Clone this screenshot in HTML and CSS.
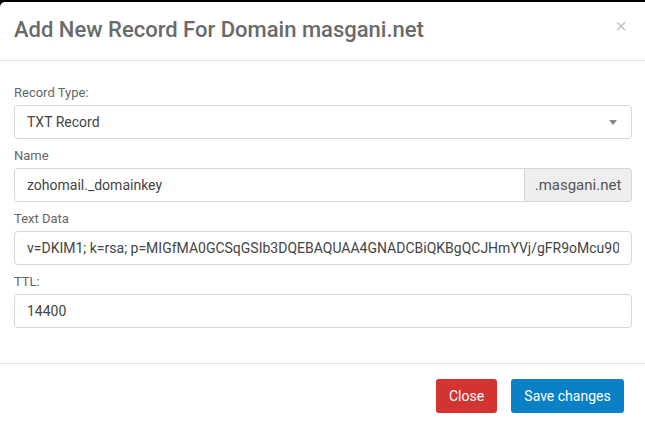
FILE: index.html
```html
<!DOCTYPE html>
<html lang="en">
<head>
<meta charset="utf-8">
<title>Add New Record</title>
<link rel="stylesheet" href="styles.css">
</head>
<body>
<div class="modal">
  <div class="modal-header">
    <h4 class="modal-title">Add New Record For Domain masgani.net</h4>
    <button class="close" type="button" aria-label="Close">&times;</button>
  </div>
  <div class="modal-body">
    <div class="form-group">
      <div class="label">Record Type:</div>
      <div class="field select">
        <span class="value">TXT Record</span>
        <span class="caret"></span>
      </div>
    </div>
    <div class="form-group">
      <div class="label">Name</div>
      <div class="input-group">
        <div class="field grow"><span class="value">zohomail._domainkey</span></div>
        <span class="addon">.masgani.net</span>
      </div>
    </div>
    <div class="form-group">
      <div class="label">Text Data</div>
      <div class="field"><span class="value">v=DKIM1; k=rsa; p=MIGfMA0GCSqGSIb3DQEBAQUAA4GNADCBiQKBgQCJHmYVj/gFR9oMcu90</span></div>
    </div>
    <div class="form-group">
      <div class="label">TTL:</div>
      <div class="field"><span class="value">14400</span></div>
    </div>
  </div>
  <div class="modal-footer">
    <button class="btn btn-danger" type="button">Close</button>
    <button class="btn btn-primary" type="button">Save changes</button>
  </div>
</div>
</body>
</html>
```
FILE: styles.css
```css
* {
  box-sizing: border-box;
}

html, body {
  margin: 0;
  height: 100%;
}

body {
  background: #000;
  padding-top: 2px;
  font-family: Roboto, "Liberation Sans", sans-serif;
  overflow: hidden;
}

.modal {
  background: #fff;
  border-radius: 5px 0 0 0;
  height: 100%;
}

.modal-header {
  display: flex;
  align-items: flex-start;
  justify-content: space-between;
  padding: 16px 14px 18px 14px;
  border-bottom: 1px solid #e5e5e5;
}

.modal-title {
  margin: 0;
  font-size: 22px;
  line-height: 24px;
  font-weight: 500;
  color: #6a6a6a;
}

.close {
  border: 0;
  background: none;
  padding: 0;
  margin: -2px 4px 0 0;
  font-family: "Liberation Sans", sans-serif;
  font-size: 20px;
  line-height: 20px;
  font-weight: 400;
  color: #c4c4c4;
}

.modal-body {
  padding: 23px 13px 27px 14px;
}

.form-group {
  margin-bottom: 8px;
}

.label {
  font-size: 13px;
  line-height: 18px;
  color: #666;
  margin-bottom: 3px;
}

/* bordered box around each control */
.field {
  display: flex;
  align-items: center;
  width: 100%;
  height: 34px;
  padding: 0 12px;
  border: 1px solid #d2d6de;
  border-radius: 4px;
  background: #fff;
  font-size: 14px;
  color: #444;
  overflow: hidden;
}

.value {
  white-space: nowrap;
  overflow: hidden;
}

.select {
  justify-content: space-between;
}

.caret {
  flex: none;
  width: 0;
  height: 0;
  border-left: 4px solid transparent;
  border-right: 4px solid transparent;
  border-top: 5px solid #888;
  margin-right: 2px;
}

.input-group {
  display: flex;
}

.field.grow {
  flex: 1;
  width: auto;
  border-radius: 4px 0 0 4px;
}

.addon {
  display: flex;
  align-items: center;
  justify-content: center;
  width: 107px;
  height: 34px;
  background: #eee;
  border: 1px solid #d2d6de;
  border-left: 0;
  border-radius: 0 4px 4px 0;
  font-size: 15px;
  color: #555;
}

.modal-footer {
  display: flex;
  justify-content: flex-end;
  gap: 14px;
  padding: 15px 21px 15px 14px;
  border-top: 1px solid #e5e5e5;
}

.btn {
  height: 34px;
  padding: 0 12px;
  border: 0;
  border-radius: 3px;
  font-family: inherit;
  font-size: 14px;
  color: #fff;
}

.btn-danger {
  background: #d33431;
  width: 61px;
}

.btn-primary {
  background: #0a80c6;
  width: 113px;
}
```
